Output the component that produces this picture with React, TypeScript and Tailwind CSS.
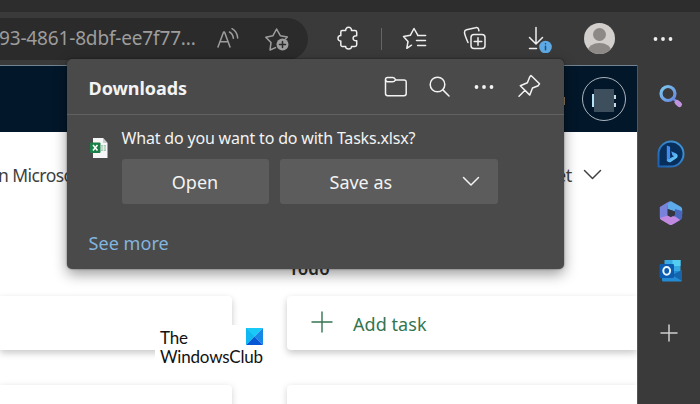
import type { ReactNode } from "react";

type IconProps = { w: number; h: number; className?: string; sw?: number; children: ReactNode };

function Icon({ w, h, className = "", sw = 1.5, children }: IconProps) {
  return (
    <svg
      width={w}
      height={h}
      viewBox={`0 0 ${w} ${h}`}
      className={`shrink-0 ${className}`}
      fill="none"
      stroke="currentColor"
      strokeWidth={sw}
      strokeLinecap="round"
      strokeLinejoin="round"
      aria-hidden="true"
    >
      {children}
    </svg>
  );
}

function Dots({ className = "" }: { className?: string }) {
  return (
    <Icon w={20} h={6} className={className}>
      <g fill="currentColor" stroke="none">
        <circle cx="2.5" cy="3" r="1.9" />
        <circle cx="10" cy="3" r="1.9" />
        <circle cx="17.5" cy="3" r="1.9" />
      </g>
    </Icon>
  );
}

function AddressBar() {
  return (
    <div className="flex h-[42px] w-[308px] shrink-0 items-center rounded-r-full bg-[#2b2b2b] text-[#9d9d9d]">
      <span className="-ml-px w-[217px] shrink-0 text-[19px] leading-none tracking-[-0.16px] whitespace-nowrap">
        93-4861-8dbf-ee7f77...
      </span>
      <Icon w={24} h={24} sw={1.5}>
        <path d="M2 20 7.6 5h.9L14 20M4 14.8h8" />
        <path d="M13.5 5c2.3 1.300 3.600 3.400 3.900 6.300M16 1.700c3.400 1.900 5.300 5 5.700 9.300" />
      </Icon>
      <Icon w={26} h={26} sw={1.5} className="ml-6">
        <path d="M11.500 21.600 6 24 7 16.600 1.800 11.200 9 9.700 12.600 3l3.700 6.700 7 1.300-1.800 2" />
        <circle cx="18.500" cy="18.500" r="6" fill="currentColor" stroke="none" />
        <path d="M18.500 15.500v6M15.500 18.500h6" stroke="#2b2b2b" />
      </Icon>
    </div>
  );
}

function Toolbar() {
  return (
    <div className="flex h-[53px] shrink-0 items-center bg-[#3a3a3a] text-[#eeeeee]">
      <AddressBar />
      <Icon w={24} h={24} className="mr-[-1px] mb-[2px] ml-[29px]">
        <path d="M5.200 4.500h3.500C8.500 2.500 9.800 1.300 11.600 1.300s3.100 1.200 2.900 3.200h3.500c1 0 1.700.7 1.700 1.700v3.600c-2.300-.2-3.600.8-3.600 2.500s1.300 2.700 3.600 2.500v3.900c0 1-.7 1.700-1.700 1.700h-3.500c.2 1.800-1.100 2.600-2.900 2.600s-3.100-.8-2.900-2.600H5.500c-1 0-1.700-.7-1.700-1.700v-3.700C2 15 1 13.900 1 12.300s1-2.800 2.800-2.700V6.200c0-1 .4-1.700 1.400-1.700Z" />
      </Icon>
      <div className="ml-[21px] h-[22px] w-px bg-[#666]" />
      <Icon w={26} h={24} className="mb-[2px] ml-[20px]">
        <path d="M9.500 19.200 4.800 22.300 6 15.500 1.500 10.600 8.300 9.300 12 2.500l3.600 6.400" />
        <path d="M15.600 9.500h8M14.500 14.500h9M15.600 19.500h8" />
      </Icon>
      <Icon w={24} h={24} className="mb-[2px] ml-[35px]">
        <path d="M5 16.500C3 12 1.500 8 1.500 6.200 1.500 4.800 2.300 4 3.600 3.700L12.500 1.700c1.600-.4 2.700.3 3.100 1.600l.3 1.500" />
        <rect x="8" y="8.500" width="14" height="14" rx="3" />
        <path d="M15 11.700v7.600M11.200 15.500h7.600" />
      </Icon>
      <Icon w={26} h={28} className="ml-[39px]">
        <path d="M10 2.500v16M3.500 12.500l6.500 6.500 6.500-6.500M3.500 23.500h7" />
        <circle cx="19.500" cy="22" r="6.300" fill="#5ea9e4" stroke="none" />
        <path d="M19.500 21.300v3.400M19.500 18.700v.1" stroke="#1f4f78" />
      </Icon>
      <div className="ml-[32px] flex size-[31px] shrink-0 flex-col items-center overflow-hidden rounded-full bg-[#d2cfcc]">
        <div className="mt-[5px] size-[13px] shrink-0 rounded-full bg-[#8d8986]" />
        <div className="mt-[2px] h-[16px] w-[23px] shrink-0 rounded-[50%] bg-[#8d8986]" />
      </div>
      <Dots className="ml-[38px]" />
    </div>
  );
}

function Sidebar() {
  return (
    <aside className="flex w-[63px] shrink-0 flex-col items-center border-l border-[#555] bg-[#3a3a3a] pt-[17px] pl-[3px]">
      <svg width="28" height="28" viewBox="0 0 28 28" aria-hidden="true">
        <defs>
          <linearGradient id="ring" x1="0" y1="0" x2="1" y2="1">
            <stop offset="0" stopColor="#7cc8ee" />
            <stop offset="1" stopColor="#6688e0" />
          </linearGradient>
        </defs>
        <circle cx="11" cy="11.500" r="7" fill="none" stroke="url(#ring)" strokeWidth="3.200" />
        <path d="m16.500 17 2.500 2" stroke="#7286dd" strokeWidth="2.500" />
        <path d="m20 20.300 2.500 2.200" stroke="#c294e0" strokeWidth="5" strokeLinecap="round" />
      </svg>
      <svg width="28" height="28" viewBox="0 0 28 28" className="mt-[30px]" aria-hidden="true">
        <defs>
          <linearGradient id="chat" x1="0" y1="1" x2="1" y2="0">
            <stop offset="0" stopColor="#1c5fae" />
            <stop offset="1" stopColor="#429bdc" />
          </linearGradient>
          <linearGradient id="bing" x1="0" y1="0" x2="1" y2="1">
            <stop offset="0" stopColor="#3c83ee" />
            <stop offset="1" stopColor="#72dcf5" />
          </linearGradient>
        </defs>
        <path d="M1.500 26.500V14A12.500 12.500 0 1 1 14 26.500Z" fill="#082e5b" stroke="url(#chat)" strokeWidth="2" strokeLinejoin="round" />
        <path d="m9.800 5.500 3.300 1.300v10.600l-3.300 3.800Z" fill="#418cf0" />
        <path d="m14.200 11.200 4.900 2.200c2 .9 2 3.300.6 4.600l-5.900 3.900c-2 1-4-.2-4-2.200l7.200-3.500-1.700-.9Z" fill="url(#bing)" />
      </svg>
      <svg width="26" height="26" viewBox="0 0 26 26" className="mt-[32px]" aria-hidden="true">
        <path d="M1.800 7 9.600 2.300c1-.6 2-.7 3.200-.3-2.300 1.100-3.100 3-3.100 5.200v9.200L3.600 20c-1.200-.7-1.800-1.600-1.800-3Z" fill="#7a83dc" />
        <path d="M10 2 13 1.200 22.400 6.500c1.300.8 1.800 1.800 1.800 3.200V14l-14.500-5V6c0-1.800.8-3.200 2.300-4Z" fill="#5dabea" />
        <path d="m17 9 7.200 2v6c0 1.300-.6 2.300-1.700 3l-7 4 .9-9.500Z" fill="#4967bd" />
        <path d="m2 18 7.700-2.600 7.600 1.200 4.800 3.500-7.500 4.300c-1.200.7-2.400.7-3.600 0l-7.200-4.200C2.800 19.600 2.200 19 2 18Z" fill="#c18ae0" />
        <path d="m9.700 8.900 7.300 2.500v3.300l-4.200 2.600-3.100-1.900Z" fill="#353540" />
      </svg>
      <svg width="26" height="26" viewBox="0 0 26 26" className="mt-[32px]" aria-hidden="true">
        <path d="M6.500 2h16v11h-16Z" fill="#36aae5" />
        <path d="M14.500 2h8v6h-8Z" fill="#53cef2" />
        <path d="M4 13h20v9c0 1-.5 1.500-1.500 1.500h-17c-1 0-1.500-.5-1.500-1.500Z" fill="#238bd4" />
        <path d="M24 12v11L14 17Z" fill="#1565ac" />
        <rect x="1.500" y="6" width="14.500" height="14" rx="1.200" fill="#0c5bae" />
        <ellipse cx="8.700" cy="12.800" rx="3.400" ry="3.900" fill="none" stroke="#e8f6ff" strokeWidth="2" />
      </svg>
      <Icon w={18} h={18} className="mt-[40px] mr-[3px] text-[#d0d0d0]">
        <path d="M9 1v16M1 9h16" />
      </Icon>
    </aside>
  );
}

function Page() {
  return (
    <main className="flex min-w-0 flex-1 flex-col overflow-hidden border-t border-[#718391] bg-white text-[#404040]">
      <header className="flex h-[66px] shrink-0 items-center justify-end bg-[#03172a] pr-[11px]">
        <div className="mt-1 mr-[17px] h-2 w-[4px] bg-[#a58663]" />
        <div className="flex size-[44px] items-center justify-center rounded-full border border-[#aab5bd]">
          <div className="mt-[3px] flex items-center">
            <div className="h-[13px] w-[2px] bg-[#b6e4f5]" />
            <div className="h-[23px] w-[20px] bg-[#3d4f5d]" />
            <div className="h-3 w-[2px] border-y-4 border-[#c9d9e2]" />
          </div>
        </div>
      </header>
      <div className="flex h-[86px] shrink-0 items-center justify-between pr-[35px] text-[18px]">
        <span className="-ml-[6px] text-[17.5px] tracking-[-0.55px]">in Microsoft 365</span>
        <div className="flex items-center gap-[11px] tracking-[-0.3px]">
          <span>Planner Budget</span>
          <Icon w={19} h={12}>
            <path d="m1.500 1.500 8 8 8-8" />
          </Icon>
        </div>
      </div>
      <div className="flex h-[77px] shrink-0 items-end pb-[14px] pl-[289px] text-[17px] font-semibold tracking-[0.2px] text-[#303030]">
        Todo
      </div>
      <div className="grid shrink-0 grid-cols-[232px_350px] gap-x-[55px] gap-y-[35px] pt-px">
        <div className="h-[54px] rounded-r-[4px] bg-white shadow-[0_3px_7px_rgba(0,0,0,0.22)]" />
        <div className="flex h-[54px] items-center rounded-l-[4px] bg-white pl-[24px] text-[#347551] shadow-[0_3px_7px_rgba(0,0,0,0.22)]">
          <Icon w={22} h={22} sw={1.4} className="mb-[2px]">
            <path d="M11 1v20M1 11h20" />
          </Icon>
          <span className="mt-[2px] ml-[20px] text-[18px] tracking-[0.05px]">Add task</span>
        </div>
        <div className="h-[54px] rounded-r-[4px] bg-white shadow-[0_2px_7px_rgba(0,0,0,0.18)]" />
        <div className="h-[54px] rounded-l-[4px] bg-white shadow-[0_2px_7px_rgba(0,0,0,0.18)]" />
      </div>
    </main>
  );
}

function ExcelIcon() {
  return (
    <svg width="20" height="22" viewBox="0 0 20 22" className="shrink-0" aria-hidden="true">
      <path d="M4 1h10l4.500 5v15H4Z" fill="#f7f7f7" />
      <path d="M14 1v5h4.500Z" fill="#c9cdcb" />
      <path d="M12 8h5v6h-5Z" fill="#a5c9b2" />
      <path d="M12 10h5M12 12h5M14.500 8v6" stroke="#f7f7f7" strokeWidth=".7" />
      <rect x="1" y="5.500" width="10.500" height="10.500" rx="1" fill="#1b8048" />
      <path d="m4 8 4.500 5.500M8.500 8 4 13.500" stroke="#fff" strokeWidth="1.600" />
    </svg>
  );
}

function DownloadsPopup() {
  return (
    <section className="absolute top-[59px] left-[66.5px] flex h-[210px] w-[497px] flex-col rounded-[5px] bg-[#4a4a4a] text-[#f3f3f3] shadow-[0_5px_14px_rgba(0,0,0,0.4),0_0_2px_rgba(0,0,0,0.5)]">
      <header className="flex h-[56px] shrink-0 items-center border-b border-[#616161] pr-[23px] pl-[22px]">
        <h2 className="mt-[3px] flex-1 text-[18px] font-bold tracking-[-0.05px]">Downloads</h2>
        <Icon w={24} h={22}>
          <path d="M1.500 4v13.500c0 1.300.8 2.200 2.200 2.200h16.300c1.400 0 2.200-.9 2.200-2.200V6.200c0-1.400-.8-2.200-2.200-2.200h-8.300" />
          <path d="M3.500 5.700c-1.300 0-2-.8-2-2.100s.8-2.100 2-2.100h5.300c1.400 0 2.200.8 2.700 2.300-.7 1.200-1.500 1.900-2.900 1.900Z" />
        </Icon>
        <Icon w={22} h={22} className="ml-[21px]">
          <circle cx="8.500" cy="8.500" r="7.300" />
          <path d="m13.900 13.900 6.100 6.100" />
        </Icon>
        <Dots className="ml-[23px]" />
        <Icon w={24} h={24} className="mb-px ml-[23px]">
          <path d="m14 1.500 8.500 8.300-1.300 1.900-5.700 2.300-2.700 7.100-9.500-9.300 7.100-3L12.700 3ZM8 16.300l-6 6" />
        </Icon>
      </header>
      <div className="flex pt-[13px] pl-[22px]">
        <div className="w-[33px] shrink-0 pt-[9px]">
          <ExcelIcon />
        </div>
        <div>
          <p className="h-[31px] text-[16px] leading-[20px] tracking-[-0.18px] whitespace-nowrap">What do you want to do with Tasks.xlsx?</p>
          <div className="flex gap-[11px] text-[18px]">
            <button className="h-[45px] w-[147px] rounded-[3px] bg-[#5c5c5c] pt-[2px]">Open</button>
            <button className="flex h-[45px] w-[218px] items-center rounded-[3px] bg-[#5c5c5c] pt-[2px] pl-[50px]">
              <span className="w-[132px] text-left">Save as</span>
              <Icon w={18} h={11} className="mb-[2px]">
                <path d="m1.500 1.500 7.500 7.500 7.500-7.500" />
              </Icon>
            </button>
          </div>
        </div>
      </div>
      <a className="mt-[25px] ml-[22px] text-[18px] leading-[28px] tracking-[0.06px] text-[#83b5df]">See more</a>
    </section>
  );
}

function Watermark() {
  return (
    <div className="absolute top-[325px] left-[155px] h-[42px] w-[111px] bg-white pt-[3px] pl-[5px] font-['Lato'] text-[17px] leading-[19px] tracking-[-0.2px] text-[#111]">
      <div className="flex h-[19px] justify-between pr-[3px]">
        <span>The</span>
        <svg width="17" height="17" viewBox="0 0 17 17" aria-hidden="true">
          <path d="M0 0h17L0 17Z" fill="#19caf6" />
          <path d="M17 0v17L8.500 8.500Z" fill="#1688e8" />
          <path d="M0 17 8.500 8.500 17 17Z" fill="#0757d5" />
          <path d="M0 0v17l8.500-8.500Z" fill="#10b8f2" />
        </svg>
      </div>
      <div>WindowsClub</div>
    </div>
  );
}

export default function App() {
  return (
    <div className="relative flex h-[404px] w-[700px] flex-col overflow-hidden bg-[#3a3a3a] font-['Noto_Sans','Open_Sans',sans-serif]">
      <div className="h-[12px] shrink-0 bg-[#2d2d2d]" />
      <Toolbar />
      <div className="flex min-h-0 flex-1">
        <Page />
        <Sidebar />
      </div>
      <DownloadsPopup />
      <Watermark />
    </div>
  );
}
